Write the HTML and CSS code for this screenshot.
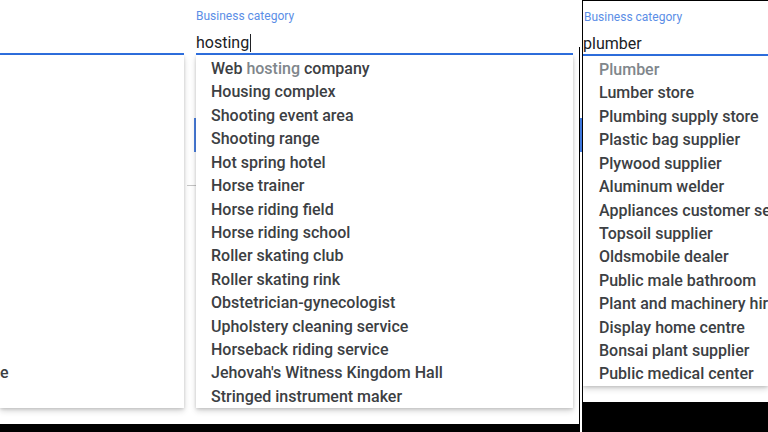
FILE: index.html
```html
<!DOCTYPE html>
<html lang="en">
<head>
<meta charset="utf-8">
<title>Business category suggestions</title>
<link rel="stylesheet" href="styles.css">
</head>
<body>
<div class="collage">
  <div class="shot shot-main">
    <section class="field field-left">
      <div class="label">&nbsp;</div>
      <div class="input">&nbsp;</div>
      <div class="underline"></div>
      <ul class="menu">
        <li class="item">&nbsp;</li>
        <li class="item">&nbsp;</li>
        <li class="item">&nbsp;</li>
        <li class="item">&nbsp;</li>
        <li class="item">&nbsp;</li>
        <li class="item">&nbsp;</li>
        <li class="item">&nbsp;</li>
        <li class="item">&nbsp;</li>
        <li class="item">&nbsp;</li>
        <li class="item">&nbsp;</li>
        <li class="item">&nbsp;</li>
        <li class="item">&nbsp;</li>
        <li class="item">&nbsp;</li>
        <li class="item item-cut">e</li>
        <li class="item">&nbsp;</li>
      </ul>
    </section>
    <div class="gutter"><span class="peek-bar"></span><span class="peek-dash"></span></div>
    <section class="field field-mid">
      <div class="label">Business category</div>
      <div class="input">hosting<span class="caret"></span></div>
      <div class="underline"></div>
      <ul class="menu">
        <li class="item">Web <span class="match">hosting</span> company</li>
        <li class="item">Housing complex</li>
        <li class="item">Shooting event area</li>
        <li class="item">Shooting range</li>
        <li class="item">Hot spring hotel</li>
        <li class="item">Horse trainer</li>
        <li class="item">Horse riding field</li>
        <li class="item">Horse riding school</li>
        <li class="item">Roller skating club</li>
        <li class="item">Roller skating rink</li>
        <li class="item">Obstetrician-gynecologist</li>
        <li class="item">Upholstery cleaning service</li>
        <li class="item">Horseback riding service</li>
        <li class="item">Jehovah's Witness Kingdom Hall</li>
        <li class="item">Stringed instrument maker</li>
      </ul>
    </section>
  </div>
  <div class="divider"><div class="divider-line"><span class="peek-bar peek-bar-side"></span></div></div>
  <div class="shot shot-side">
    <section class="field field-right">
      <div class="label">Business category</div>
      <div class="input">plumber</div>
      <div class="underline"></div>
      <ul class="menu">
        <li class="item"><span class="match">Plumber</span></li>
        <li class="item">Lumber store</li>
        <li class="item">Plumbing supply store</li>
        <li class="item">Plastic bag supplier</li>
        <li class="item">Plywood supplier</li>
        <li class="item">Aluminum welder</li>
        <li class="item">Appliances customer service</li>
        <li class="item">Topsoil supplier</li>
        <li class="item">Oldsmobile dealer</li>
        <li class="item">Public male bathroom</li>
        <li class="item">Plant and machinery hire</li>
        <li class="item">Display home centre</li>
        <li class="item">Bonsai plant supplier</li>
        <li class="item">Public medical center</li>
      </ul>
    </section>
  </div>
</div>
</body>
</html>
```

FILE: styles.css
```css
* { box-sizing: border-box; }

html, body {
  margin: 0;
  padding: 0;
}

body {
  width: 768px;
  height: 432px;
  overflow: hidden;
  background: #000;
  font-family: Roboto, "Noto Sans", "Liberation Sans", sans-serif;
  color: #3c4043;
}

.collage {
  display: flex;
  align-items: flex-start;
  width: 768px;
  height: 432px;
  overflow: hidden;
}

.shot {
  flex: none;
  background: #fff;
  overflow: hidden;
}

.shot-main {
  width: 579px;
  height: 424px;
  display: flex;
  align-items: flex-start;
}

.field {
  flex: none;
  display: flex;
  flex-direction: column;
}

.field-left { width: 184px; }
.field-mid { width: 377px; }

.label {
  padding-top: 8px;
  font-size: 12px;
  line-height: 16px;
  color: #5b8ee6;
  white-space: nowrap;
}

.input {
  height: 29px;
  padding-top: 9px;
  font-size: 16px;
  line-height: 20px;
  color: #202124;
  white-space: nowrap;
}

.caret {
  display: inline-block;
  width: 1px;
  height: 18px;
  margin-left: 1px;
  background: #202124;
  vertical-align: -4px;
}

.underline {
  height: 2px;
  background: #2f71e2;
}

.menu {
  margin: 0;
  padding: 2px 0 0;
  list-style: none;
  background: #fff;
  box-shadow: 0 3px 6px rgba(0, 0, 0, 0.16), 0 1px 3px rgba(0, 0, 0, 0.14);
}

.item {
  height: 23.43px;
  padding-left: 15px;
  font-size: 16px;
  font-weight: 500;
  line-height: 23.43px;
  color: #3c4043;
  white-space: nowrap;
  overflow: hidden;
}

.item-cut { padding-left: 0; }

.match {
  color: #80868b;
}

.gutter {
  flex: none;
  width: 12px;
  height: 200px;
  display: flex;
  flex-direction: column;
  align-items: flex-end;
  padding-top: 118px;
}

.peek-bar {
  display: block;
  width: 2px;
  height: 34px;
  background: #4a7fe0;
}

.peek-dash {
  display: block;
  width: 9px;
  height: 1px;
  margin-top: 33px;
  background: #c4c4c4;
}

.divider {
  flex: none;
  width: 3px;
  height: 432px;
  padding-top: 47px;
  background: #fff;
}

.divider-line {
  height: 385px;
  padding-top: 71px;
  border-left: 1px solid #000;
}

.peek-bar-side {
  width: 3px;
  height: 34px;
  background: #3f78dd;
}

.shot-side {
  width: 186px;
  height: 402px;
  border-left: 1px solid #000;
  border-top: 1px solid #000;
}

.field-right { width: 185px; }

.field-right .label { padding-left: 1px; }
.field-right .input { padding-top: 9px; height: 29px; }
.field-right .item { padding-left: 16px; }
.field-right .menu { padding-top: 2px; }
```
